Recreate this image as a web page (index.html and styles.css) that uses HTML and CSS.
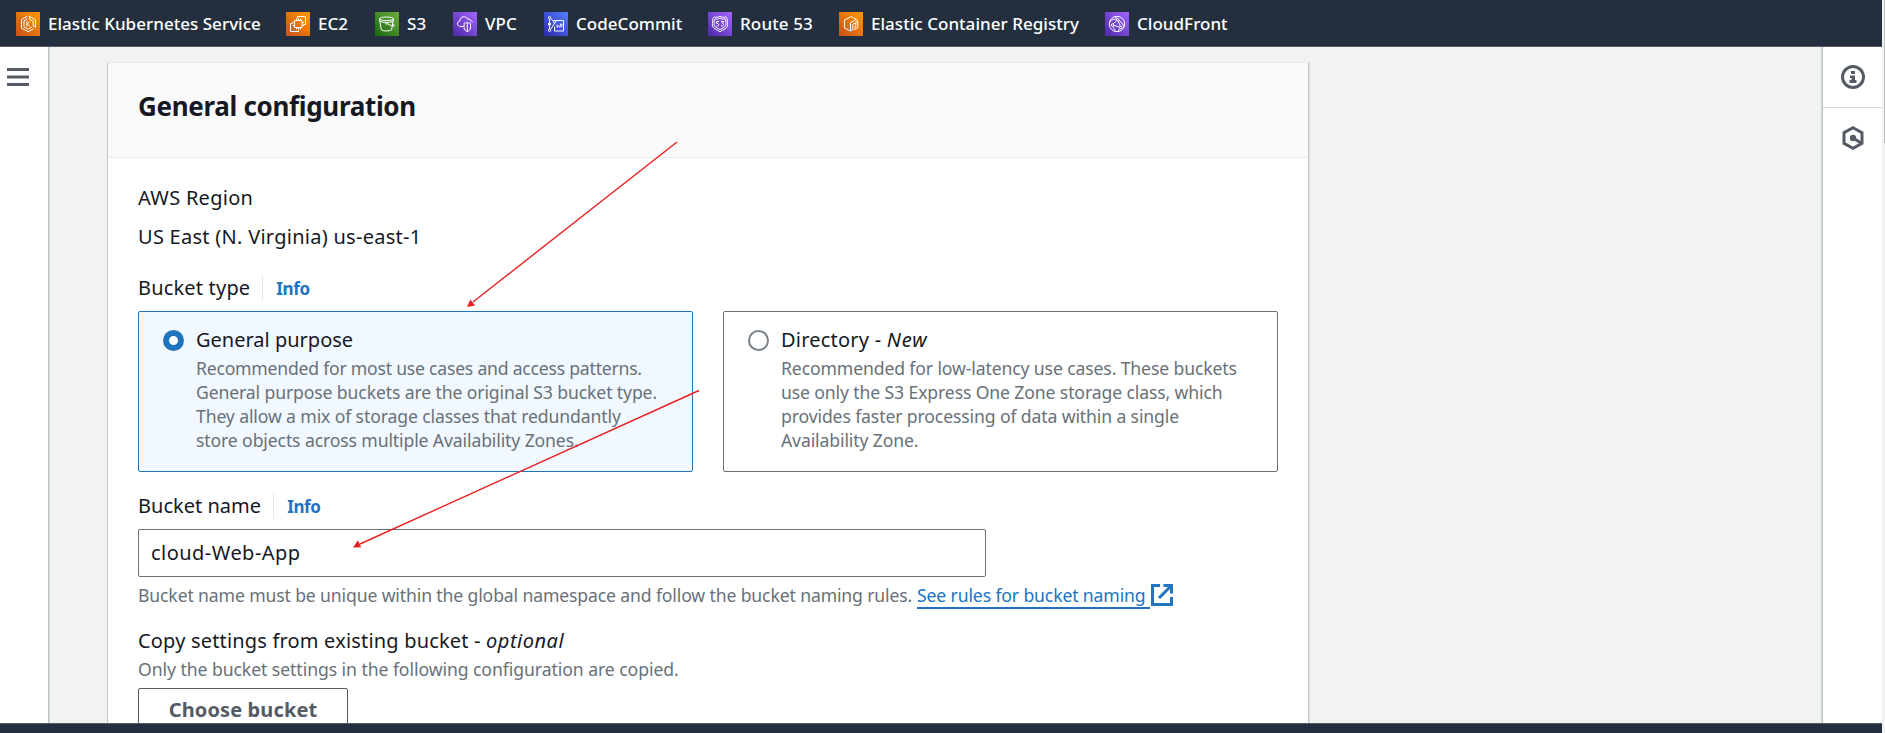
FILE: index.html
```html
<!DOCTYPE html>
<html lang="en">
<head>
<meta charset="utf-8">
<title>Create bucket</title>
<link rel="stylesheet" href="styles.css">
</head>
<body>
<svg class="defs" aria-hidden="true">
  <defs>
    <linearGradient id="orange" x1="0" y1="1" x2="1" y2="0"><stop offset="0" stop-color="#c8511b"/><stop offset="1" stop-color="#f90"/></linearGradient>
    <linearGradient id="green" x1="0" y1="1" x2="1" y2="0"><stop offset="0" stop-color="#1b660f"/><stop offset="1" stop-color="#6cae3e"/></linearGradient>
    <linearGradient id="purple" x1="0" y1="1" x2="1" y2="0"><stop offset="0" stop-color="#4d27a8"/><stop offset="1" stop-color="#a166ff"/></linearGradient>
    <linearGradient id="blue" x1="0" y1="1" x2="1" y2="0"><stop offset="0" stop-color="#2e27ad"/><stop offset="1" stop-color="#527fff"/></linearGradient>
  </defs>
</svg>
<div class="app">
  <nav class="topbar">
    <a class="fav fav-eks"><svg class="svc" viewBox="0 0 24 24"><rect width="24" height="24" fill="url(#orange)"/><path d="M11.3 4.3 5.5 7.6v8.5l6.8 3.6 5.3-2.9M13.5 4.3l6 3.5v7.4l-2.3-1.2V9.2l-3.7-2.1zM11.3 7 8 9v5.800l4.200 2.400 3.600-2"/><path d="M10.900 9.300v5M13.800 9.400l-2.600 2.500 2.700 2.600"/></svg><span>Elastic Kubernetes Service</span></a>
    <a class="fav fav-ec2"><svg class="svc" viewBox="0 0 24 24"><rect width="24" height="24" fill="url(#orange)"/><path d="M8.500 8.500h7.500v7h-7.500zM10.500 8.500V6.500M12.500 8.500V6.500M14.500 8.500V6.500M10.500 15.500v2M12.500 15.500v2M14.500 15.500v2M8.500 10.500h-2M8.500 13.500h-2M16 10.500h2M16 13.500h2"/><path d="M11.500 6.500v-2h8v8h-2M6.500 11.500h-2v8h8v-2"/></svg><span>EC2</span></a>
    <a class="fav fav-s3"><svg class="svc" viewBox="0 0 24 24"><rect width="24" height="24" fill="url(#green)"/><ellipse cx="11.500" cy="6.800" rx="7" ry="1.800"/><path d="M4.500 6.800 6.300 17.800c1.500 1.600 8.700 1.600 10.300 0L18.500 6.800M5 9.300c3 1.500 10 1.500 13.100 0"/><circle cx="11.500" cy="11.500" r=".8"/><path d="M12.300 11.700c3 1.500 5.500 2.600 7 2.300 .8-.5-.3-1.300-1.600-1.900"/></svg><span>S3</span></a>
    <a class="fav fav-vpc"><svg class="svc" viewBox="0 0 24 24"><rect width="24" height="24" fill="url(#purple)"/><path d="M10.300 14.500H7.600C3.600 14.200 3.400 9.800 6.800 9.200 7 3.800 13 3.300 14.700 7.300c1.600-.8 3 .2 3 1.600 1 .2 1.600.6 2 1.200"/><path d="M14.300 10.700c1.300 0 3.200.6 3.200.6v4.500c0 2-1.700 3.200-3.200 3.800-1.600-.6-3.200-1.800-3.200-3.800v-4.500s1.800-.6 3.200-.6zM14.300 10.700v8.900"/></svg><span>VPC</span></a>
    <a class="fav fav-cc"><svg class="svc" viewBox="0 0 24 24"><rect width="24" height="24" fill="url(#blue)"/><path d="M5.500 7v10M6.500 6.500l3.500 3M11 10.500l-4.500 7M10.500 8.500h9v10.500h-9v-4.500"/><circle cx="5.500" cy="5.700" r="1.200"/><circle cx="5.500" cy="12" r="1.200"/><circle cx="5.500" cy="18.300" r="1.200"/><circle cx="10.600" cy="9.700" r="1.200"/><path d="m13 12.500 .2 3 1.300-2M15.500 15.500l1.500-4M17.800 12l.3 2-1.300 1.500"/></svg><span>CodeCommit</span></a>
    <a class="fav fav-r53"><svg class="svc" viewBox="0 0 24 24"><rect width="24" height="24" fill="url(#purple)"/><path d="M6.300 4.800C8 5.600 10.500 5.300 12 4.300c1.500 1 4 1.300 5.700.5l1.900 2.500c-1 1.900.2 3.700.1 5.500-.2 4-4.200 4.600-7.700 6.900-3.500-2.300-7.500-2.900-7.700-6.900-.1-1.800 1.100-3.600.1-5.500z"/><path d="M7 6.800c1.800.5 3.600.2 5-.6 1.400.8 3.200 1.100 5 .6l.9 1.200c-.5 1.700.2 3 .1 4.600-.3 2.900-3.200 3-6 5-2.800-2-5.700-2.100-6-5-.1-1.600.6-2.900.1-4.600z"/><path d="M11 9.500H8.500v2c3-.4 3 2.800 0 2.500M13 9.500h2.800l-1.500 1.800c2.300.2 1.600 3-1.300 2.700"/></svg><span>Route 53</span></a>
    <a class="fav fav-ecr"><svg class="svc" viewBox="0 0 24 24"><rect width="24" height="24" fill="url(#orange)"/><path d="M10.500 18.700 5.500 16V8L12 4.600l5.500 2.800-6 3.300v8.300l2.300-1.300v-5.400l3-1.700v4.500l-2 1.200M16.800 10.600l2-1.100v6.300l-4 2.300M17.500 7.400l1.300 2.100"/></svg><span>Elastic Container Registry</span></a>
    <a class="fav fav-cf"><svg class="svc" viewBox="0 0 24 24"><rect width="24" height="24" fill="url(#purple)"/><circle cx="12" cy="12" r="7.700"/><circle cx="12.500" cy="7.700" r="1.200"/><circle cx="7.500" cy="13" r="1.200"/><circle cx="15.800" cy="15.500" r="1.200"/><path d="M11.600 8.700 8 12M13 8.900l2.500 5.500M8.700 13.300l6 2M4.600 10.500C7 7 9.500 6.800 11.300 7.300M13.700 8c2 1.200 4 4 5.500 7M8 14.300c.5 2 1.500 3.600 3 5.200M15 16.600c-1 1.200-1.800 2-2.500 2.900M10 4.600l2 2"/></svg><span>CloudFront</span></a>
  </nav>

  <div class="body">
    <aside class="left"><svg class="menu" viewBox="0 0 22 18"><path d="M0 1.500h22M0 9h22M0 16.500h22"/></svg></aside>

    <main class="main">
      <section class="card">
        <header class="card-head"><h2>General configuration</h2></header>
        <div class="card-body">
          <div class="label region">AWS Region</div>
          <div class="label region-value">US East (N. Virginia) us-east-1</div>

          <div class="field-head type-head"><span class="label">Bucket type</span><a class="info">Info</a></div>
          <div class="tiles">
            <div class="tile selected">
              <span class="radio on"></span>
              <div>
                <div class="label tile-title">General purpose</div>
                <p class="desc"><span class="tight">Recommended for most use cases and access patterns.</span><br>General purpose buckets are the original S3 bucket type.<br>They allow a mix of storage classes that redundantly<br>store objects across multiple Availability Zones.</p>
              </div>
            </div>
            <div class="tile">
              <span class="radio"></span>
              <div>
                <div class="label tile-title wide">Directory - <em>New</em></div>
                <p class="desc">Recommended for low-latency use cases. These buckets<br>use only the S3 Express One Zone storage class, which<br>provides faster processing of data within a single<br>Availability Zone.</p>
              </div>
            </div>
          </div>

          <div class="field-head name-head"><span class="label name-label">Bucket name</span><a class="info">Info</a></div>
          <div class="input">cloud-Web-App</div>
          <div class="hint"><span>Bucket name must be unique within the global namespace and follow the bucket naming rules.</span><a class="link">See rules for bucket naming</a><svg class="ext" viewBox="0 0 22 22"><path d="M9 1.500H1.500v19h19V13M12.500 1.500h8v8M20 2 8 14"/></svg></div>

          <div class="label copy">Copy settings from existing bucket - <em>optional</em></div>
          <div class="copy-hint">Only the bucket settings in the following configuration are copied.</div>
          <button class="choose">Choose bucket</button>
        </div>
      </section>
    </main>

    <aside class="right">
      <div class="tool"><svg viewBox="0 0 24 24"><circle cx="12" cy="12" r="10.500"/><path class="solid" d="M10 6h4v3h-4zM9 10.500h5V15h1.500v3h-7v-3h2v-2H9z"/></svg></div>
      <div class="tool"><svg viewBox="0 0 24 24"><path d="M12 1.700 21 6.700v10.600l-9 5-9-5V6.700zM12 12l8 5"/><circle class="solid" cx="12" cy="12" r="3.200"/></svg></div>
    </aside>
  </div>
  <footer class="bottombar"></footer>
</div>
<div class="scroll-track"><div class="thumb"></div></div>
<svg class="arrows" viewBox="0 0 1885 733">
  <path class="shaft" d="M677 142 473 302M699 390.500 360 544"/>
  <path class="tip" d="M467 307l3.300-7.600 4.800 6.100zM353 547.500l5-7.200 3.200 7z"/>
</svg>
</body>
</html>
```
FILE: styles.css
```css
* { box-sizing: border-box; }
html, body { margin: 0; height: 100%; overflow: hidden; }
body { display: flex; background: #f1f1f1; color: #16191f; font-family: "Noto Sans", sans-serif; }
h2, p { margin: 0; }
.defs { position: absolute; width: 0; height: 0; }
.app { width: 1882px; height: 733px; display: flex; flex-direction: column; }

.topbar { flex: none; height: 47px; padding: 12px 0 0 16px; display: flex; align-items: flex-start; background: #232f3e; border-bottom: 1px solid #545b64; }
.fav { display: flex; gap: 8px; color: #fff; font-size: 17px; font-weight: 500; line-height: 23px; white-space: nowrap; letter-spacing: .03px; }
.svc { width: 24px; height: 24px; flex: none; fill: none; stroke: #fff; stroke-width: 1; }
.svc rect { stroke: none; }
.fav-eks { width: 270px; }
.fav-ec2 { width: 89px; }
.fav-s3 { width: 78px; }
.fav-vpc { width: 91px; }
.fav-cc { width: 164px; }
.fav-r53 { width: 131px; letter-spacing: .13px; }
.fav-ecr { width: 266px; }

.body { flex: 1; min-height: 0; display: flex; background: #f1f3f3; overflow: hidden; }
.left { width: 49px; flex: none; background: #fff; border-right: 1px solid #b8c1c3; box-shadow: 1px 0 1px #dfe3e4; padding: 21px 0 0 7px; }
.menu { display: block; width: 22px; height: 18px; stroke: #545b64; stroke-width: 3; }
.main { flex: 1; padding: 15px 0 0 58px; }
.right { width: 60px; flex: none; background: #fff; border-left: 1px solid #bfc3c4; box-shadow: -1px 0 1px #d5dbdb; }
.tool { height: 61px; display: flex; justify-content: center; align-items: center; border-bottom: 1px solid #d5d8d9; }
.tool:last-child { height: 60px; border-bottom: 0; }
.tool svg { width: 24px; height: 24px; fill: none; stroke: #545b64; stroke-width: 3; }
.tool .solid { fill: #545b64; stroke: none; }

.card { width: 1202px; height: 720px; background: #fff; border: 1px solid #c0c6c8; border-top-color: #eaeded; box-shadow: 1px 1px 1px #e0e4e4; }
.card-head { height: 95px; padding: 27px 30px 0; background: #fafafa; border-bottom: 1px solid #eaeded; }
.card-head h2 { font-size: 26px; line-height: 32px; font-weight: 700; letter-spacing: -.32px; }
.card-body { padding: 28px 29px 0 30px; }
.label { font-size: 20px; line-height: 24px; letter-spacing: .18px; white-space: nowrap; }
.region { letter-spacing: .28px; }
.region-value { margin-top: 15px; letter-spacing: .27px; }
.field-head { display: flex; height: 26px; }
.field-head .label { line-height: 26px; }
.type-head { margin: 26px 0 10px; }
.name-head { margin: 21px 0 10px; }
.field-head .name-label { letter-spacing: .02px; }
.info { margin-left: 12px; padding-left: 13px; border-left: 1px solid #e4e7e7; color: #2074c0; font-size: 17px; font-weight: 700; line-height: 27px; letter-spacing: -.35px; }

.tiles { display: grid; grid-template-columns: 555px 555px; gap: 30px; height: 161px; }
.tile { display: flex; border: 1px solid #687078; border-radius: 2px; padding: 16px 0 0 24px; gap: 12px; }
.tile.selected { border-color: #2074b8; background: #f1f8ff; }
.tile-title { letter-spacing: 0; }
.wide { letter-spacing: .22px; }
.wide em { letter-spacing: .9px; }
.radio { flex: none; width: 21px; height: 21px; margin-top: 2px; border: 2px solid #7b838a; border-radius: 50%; background: #fff; }
.radio.on { border: 6px solid #2074bb; }
.desc { margin-top: 4px; color: #687078; font-size: 17.6px; line-height: 24px; letter-spacing: -.12px; white-space: nowrap; }
.tight { letter-spacing: -.22px; }

.input { width: 848px; height: 48px; border: 1px solid #687078; border-radius: 2px; padding-left: 12px; font-size: 20px; line-height: 45px; letter-spacing: .46px; }
.hint { margin-top: 6px; height: 24px; display: flex; color: #687078; font-size: 17.6px; line-height: 24px; letter-spacing: -.13px; white-space: nowrap; }
.hint span { width: 779px; }
.link { width: 233px; height: 26px; border-bottom: 2px solid #2074c0; color: #2074c0; }
.ext { margin: 1px 0 0 1px; width: 22px; height: 22px; fill: none; stroke: #2074c0; stroke-width: 3; }
.copy { margin-top: 22px; }
.copy em { letter-spacing: .5px; }
.copy-hint { margin-top: 4px; color: #687078; font-size: 17.6px; line-height: 24px; letter-spacing: -.06px; }
.choose { display: block; margin-top: 7px; width: 210px; height: 48px; padding: 0 0 4px; border: 1px solid #545b64; border-radius: 2px; background: #fff; color: #545b64; font: 700 20px/42px "Noto Sans", sans-serif; letter-spacing: .12px; }

.bottombar { flex: none; height: 10px; background: #232f3e; border-top: 1px solid #545b64; }
.scroll-track { width: 3px; height: 733px; }
.thumb { margin-left: 2px; width: 1px; height: 143px; background: #c1c1c1; }
.arrows { position: absolute; left: 0; top: 0; width: 1885px; height: 733px; pointer-events: none; }
.shaft { fill: none; stroke: #e8201f; stroke-width: 1.4; }
.tip { fill: #e8201f; }
```
